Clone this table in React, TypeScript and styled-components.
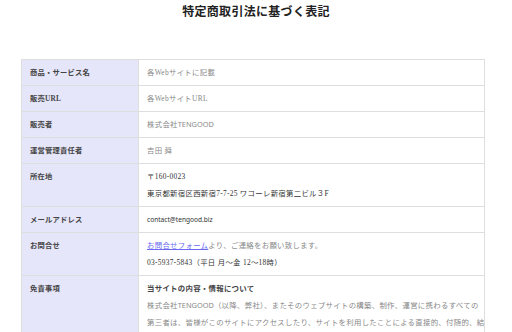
import React from "react";
import styled, { createGlobalStyle } from "styled-components";

const Global = createGlobalStyle`
  html, body { margin: 0; padding: 0; background: #fff; }
  body { font-family: "Liberation Serif", "Noto Sans CJK JP", serif; overflow: hidden; }
`;

const Page = styled.div`
  width: 512px;
  height: 332px;
  overflow: hidden;
`;

const Title = styled.h1`
  margin: 0;
  padding-top: 4px;
  text-align: center;
  font-size: 12px;
  line-height: 16px;
  font-weight: bold;
  color: #222;
  letter-spacing: 0.3px;
`;

const Table = styled.table`
  margin: 39px 0 0 21px;
  width: 464px;
  border-collapse: collapse;
  table-layout: fixed;
`;

const Label = styled.th`
  width: 117px;
  box-sizing: border-box;
  background: #e6e6fa;
  border: 1px solid #dedede;
  padding: 4px 8px;
  text-align: left;
  vertical-align: top;
  font-size: 7.3px;
  line-height: 17px;
  font-weight: bold;
  color: #444;
  letter-spacing: 0.2px;
`;

const Value = styled.td`
  background: #fff;
  border: 1px solid #dedede;
  padding: 4px 8px;
  vertical-align: top;
  font-size: 7.4px;
  line-height: 17px;
  color: #888;
  letter-spacing: 0.3px;
  white-space: nowrap;
  overflow: hidden;
`;

const Line = styled.div<{ $strong?: boolean; $dark?: boolean }>`
  font-weight: ${(p) => (p.$strong ? "bold" : "normal")};
  color: ${(p) => (p.$strong ? "#444" : p.$dark ? "#333" : "inherit")};
`;

const Sans = styled.span`
  font-family: "Noto Sans", "Noto Sans CJK JP", sans-serif;
  letter-spacing: 0;
`;

const Mail = styled.span`
  font-family: "Noto Sans", "Noto Sans CJK JP", sans-serif;
  font-size: 6.6px;
  color: #333;
  letter-spacing: 0;
`;

const Link = styled.a`
  color: #6a6af0;
  text-decoration: underline;
`;

const rows: { label: string; lines: React.ReactNode[] }[] = [
  { label: "商品・サービス名", lines: ["各Webサイトに記載"] },
  { label: "販売URL", lines: ["各WebサイトURL"] },
  { label: "販売者", lines: [<span key="a">株式会社<Sans>TENGOOD</Sans></span>] },
  { label: "運営管理責任者", lines: ["吉田 舜"] },
  {
    label: "所在地",
    lines: [
      <Line key="a" $dark>〒160-0023</Line>,
      <Line key="b" $dark>東京都新宿区西新宿7-7-25 ワコーレ新宿第二ビル３F</Line>,
    ],
  },
  { label: "メールアドレス", lines: [<Mail key="m">contact@tengood.biz</Mail>] },
  {
    label: "お問合せ",
    lines: [
      <Line key="a">
        <Link href="#">お問合せフォーム</Link>より、ご連絡をお願い致します。
      </Line>,
      <Line key="b" $dark>03-5937-5843（平日 月〜金 12〜18時）</Line>,
    ],
  },
  {
    label: "免責事項",
    lines: [
      <Line key="a" $strong>当サイトの内容・情報について</Line>,
      <Line key="b">株式会社<Sans>TENGOOD</Sans>（以降、弊社）、またそのウェブサイトの構築、制作、運営に携わるすべての</Line>,
      <Line key="c">第三者は、皆様がこのサイトにアクセスしたり、サイトを利用したことによる直接的、付随的、結</Line>,
    ],
  },
];

export default function App() {
  return (
    <Page>
      <Global />
      <Title>特定商取引法に基づく表記</Title>
      <Table>
        <tbody>
          {rows.map((r) => (
            <tr key={r.label}>
              <Label>{r.label}</Label>
              <Value>{r.lines}</Value>
            </tr>
          ))}
        </tbody>
      </Table>
    </Page>
  );
}
